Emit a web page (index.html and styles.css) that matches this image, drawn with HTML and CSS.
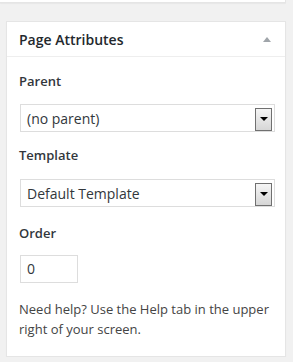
FILE: index.html
```html
<!DOCTYPE html>
<html>
<head>
<meta charset="utf-8">
<link rel="stylesheet" href="styles.css">
</head>
<body>
<div class="prev-box"></div>
<div class="postbox">
  <div class="hndle">
    <span class="title">Page Attributes</span>
    <span class="toggle"></span>
  </div>
  <div class="inside">
    <p class="label">Parent</p>
    <div class="select"><span class="val">(no parent)</span><span class="btn"><span class="arrow"></span></span></div>
    <p class="label label-template">Template</p>
    <div class="select"><span class="val">Default Template</span><span class="btn"><span class="arrow"></span></span></div>
    <p class="label label-order">Order</p>
    <div class="input">0</div>
    <p class="help">Need help? Use the Help tab in the upper right of your screen.</p>
  </div>
</div>
</body>
</html>
```
FILE: styles.css
```css
html, body {
  margin: 0;
  padding: 0;
}
body {
  background: #f1f1f1;
  font-family: "Open Sans", "Noto Sans", sans-serif;
  color: #444;
  font-size: 13px;
}
.prev-box {
  width: 285px;
  height: 2px;
  background: #fff;
  border-right: 1px solid #e5e5e5;
  border-bottom: 1px solid #e5e5e5;
  box-shadow: 0 1px 1px rgba(0,0,0,.04);
}
.postbox {
  margin: 18px 0 0 6px;
  width: 280px;
  box-sizing: border-box;
  background: #fff;
  border: 1px solid #e5e5e5;
  box-shadow: 0 1px 1px rgba(0,0,0,.04);
}
.hndle {
  display: flex;
  justify-content: space-between;
  align-items: center;
  padding: 8px 12px;
  height: 35px;
  box-sizing: border-box;
  border-bottom: 1px solid #eee;
}
.title {
  font-size: 14px;
  font-weight: 600;
  line-height: 19px;
  color: #23282d;
}
.toggle {
  width: 0;
  height: 0;
  border-left: 4px solid transparent;
  border-right: 4px solid transparent;
  border-bottom: 5px solid #a0a5aa;
  margin-right: 2px;
}
.inside {
  padding: 1px 12px 17px;
}
.label {
  margin: 14px 0 14px;
  font-weight: 600;
  line-height: 18px;
  color: #32373c;
}
.label-template {
  margin-bottom: 15px;
}
.label-order {
  margin: 17px 0 13px;
}
.select {
  display: flex;
  align-items: center;
  justify-content: space-between;
  margin-left: 1px;
  width: 255px;
  height: 28px;
  box-sizing: border-box;
  border: 1px solid #ddd;
  padding: 2px 2px 1px 6px;
  font-size: 14px;
  color: #32373c;
  background: #fff;
}
.btn {
  width: 17px;
  height: 23px;
  box-sizing: border-box;
  border: 1px solid #707070;
  background: linear-gradient(#f5f5f5, #d6d6d6);
  display: flex;
  align-items: center;
  justify-content: center;
  margin-top: 1px;
}
.arrow {
  width: 0;
  height: 0;
  border-left: 4px solid transparent;
  border-right: 4px solid transparent;
  border-top: 4px solid #000;
}
.input {
  margin-left: 1px;
  width: 58px;
  height: 28px;
  box-sizing: border-box;
  border: 1px solid #ddd;
  padding: 0 6px;
  font-size: 14px;
  line-height: 26px;
  color: #32373c;
}
.help {
  margin: 16px 0 0;
  line-height: 20px;
  color: #444;
}
```
